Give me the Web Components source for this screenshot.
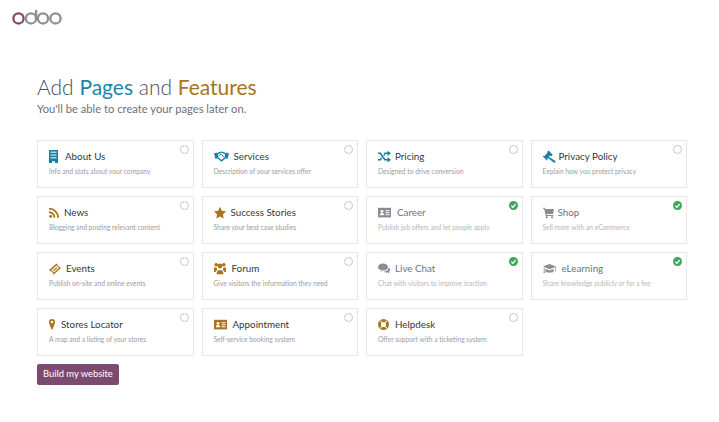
<!DOCTYPE html>
<html>
<head>
<meta charset="utf-8">
<title>Add Pages and Features</title>
<style>
    html, body { margin: 0; background: #fff; }
    body { font-family: Lato, "Noto Sans", sans-serif; color: #4b4f58; }
</style>
</head>
<body>
<theme-page>
    <odoo-logo slot="logo"></odoo-logo>
    <page-title slot="title"></page-title>
    <feature-card icon="building" tint="blue" name="About Us" text="Info and stats about your company"></feature-card>
    <feature-card icon="handshake" tint="blue" name="Services" text="Description of your services offer"></feature-card>
    <feature-card icon="random" tint="blue" name="Pricing" text="Designed to drive conversion"></feature-card>
    <feature-card icon="gavel" tint="blue" name="Privacy Policy" text="Explain how you protect privacy"></feature-card>
    <feature-card icon="rss" tint="gold" name="News" text="Blogging and posting relevant content"></feature-card>
    <feature-card icon="star" tint="gold" name="Success Stories" text="Share your best case studies"></feature-card>
    <feature-card icon="idcard" name="Career" text="Publish job offers and let people apply" checked></feature-card>
    <feature-card icon="cart" name="Shop" text="Sell more with an eCommerce" checked></feature-card>
    <feature-card icon="ticket" tint="gold" name="Events" text="Publish on-site and online events"></feature-card>
    <feature-card icon="users" tint="gold" name="Forum" text="Give visitors the information they need"></feature-card>
    <feature-card icon="comments" name="Live Chat" text="Chat with visitors to improve traction" checked></feature-card>
    <feature-card icon="cap" name="eLearning" text="Share knowledge publicly or for a fee" checked></feature-card>
    <feature-card icon="pin" tint="gold" name="Stores Locator" text="A map and a listing of your stores"></feature-card>
    <feature-card icon="idcard" tint="gold" name="Appointment" text="Self-service booking system"></feature-card>
    <feature-card icon="lifering" tint="gold" name="Helpdesk" text="Offer support with a ticketing system"></feature-card>
    <build-button slot="action">Build my website</build-button>
</theme-page>

<script>
// иконки: w - ширина и текст-отступ подобраны по картинке, высота везде 13
const ICONS = {
    building: { w: 9, gap: 7, box: '0 0 9 13', d: '<path d="M0 0h9v13H6v-1.800H3V13H0z"/><path fill="#fff" opacity=".65" d="M1.500 1.500h6v1.500h-6zM1.500 4.200h6v1.500h-6zM1.500 7h6v1.500h-6z"/>' },
    handshake: { w: 15, gap: 5, box: '0 0 15 13', d: '<path d="M0 3.500 2.600 2.500 3.600 8 1.500 9zM15 3.500 12.400 2.500 11.400 8 13.500 9z"/><path fill="none" stroke="currentColor" stroke-width="1.300" d="M3.300 3.500C5 3 6.500 2.200 7.500 2.200S10 3 11.700 3.500L11.200 7.800 7.500 10.800 3.800 7.800z"/><path fill="none" stroke="currentColor" stroke-width="1" d="M4.800 5.500 7.200 4 10 7.500"/>' },
    random: { w: 13, gap: 4, box: '0 0 13 13', d: '<path d="M0 2.500h2.800l4.600 6.500H9.500V7.200L13 9.800l-3.500 2.600v-1.800H6.500L1.900 4.100H0z"/><path d="M0 9h1.900l1.300-1.800 1 1.300L2.800 10.600H0zM5.300 5 6.500 2.500H9.500V.7L13 3.300 9.500 5.900V4.100H7.400L6.300 6.200z"/>' },
    gavel: { w: 13, gap: 3, box: '0 0 13 13', d: '<path d="M5.600.5 9.800 4.700 8 6.500 7 5.500 5.700 6.800 12.800 11.200 11.300 13 5 8 4 9 4.600 9.600 3.800 10.400-.2 6.400.6 5.600 1.200 6.200 4.600 2.800 4 2.100z"/>' },
    rss: { w: 10, gap: 5, box: '0 0 11 13', d: '<circle cx="1.800" cy="10.800" r="1.600"/><path d="M0 5.200A6.800 6.800 0 0 1 7 12.400H5A4.900 4.900 0 0 0 0 7.200z"/><path d="M0 1.200A11 11 0 0 1 11 12.400H9A9 9 0 0 0 0 3.200z"/>' },
    star: { w: 12, gap: 5, box: '0 0 12 13', d: '<path d="m6 .8 1.800 3.900 4.200.6-3 3 .7 4.300L6 10.500l-3.700 2.100.7-4.300-3-3 4.200-.6z"/>' },
    idcard: { w: 13, gap: 6, box: '0 0 13 13', d: '<path d="M0 1.800h13v9.600H0z"/><circle cx="4" cy="5.300" r="1.400" fill="#fff"/><path fill="#fff" d="M1.800 9.300c0-1.600.9-2.200 2.200-2.200s2.200.6 2.200 2.200zM7.500 4.300h4v1h-4zM7.500 6.300h4v1h-4zM7.500 8.300h4v1h-4z"/>' },
    cart: { w: 11, gap: 4, box: '0 0 11 13', d: '<path d="M0 1.800h2l.3 1.200H11l-1 4.900H3.500l.2 1h6.500V10H2.700L1.200 2.800H0z"/><circle cx="3.800" cy="11.300" r="1.100"/><circle cx="9.100" cy="11.300" r="1.100"/>' },
    ticket: { w: 12, gap: 5, box: '0 0 12 13', d: '<path fill-rule="evenodd" d="M7.500 1.500 8.800 2.800a1.200 1.200 0 0 0 1.600 1.600L12 6 4.800 12.500 3.500 11.200a1.200 1.200 0 0 0-1.600-1.600L0 8zM7.500 3.500 2.400 8l2.500 2.500 5.100-4.500z"/><path d="M7.500 4.700 8.800 6 4.900 9.400 3.600 8.100z" opacity=".7"/>' },
    users: { w: 12, gap: 6, box: '0 0 12 13', d: '<circle cx="2.200" cy="2.800" r="1.800"/><circle cx="9.800" cy="2.800" r="1.800"/><circle cx="6" cy="4" r="2.400"/><path d="M0 5.500h2.600c0 1.200.4 2 1 2.600-1 .3-1.800 1-2 1.900H0zM12 5.500H9.400c0 1.200-.4 2-1 2.600 1 .3 1.800 1 2 1.900H12z"/><path d="M2.600 12.200c0-3 1.100-4 2.300-4h2.200c1.200 0 2.300 1 2.300 4z"/>' },
    comments: { w: 12, gap: 5, box: '0 0 12 13', d: '<ellipse cx="5" cy="5" rx="5" ry="3.600"/><path d="M1.200 10.200c.8 0 1.500-.8 1.900-1.500l1.500.3z"/><path d="M10.500 5.200c1 .7 1.500 1.500 1.500 2.500 0 .9-.5 1.700-1.100 2.200 0 .5.400 1 .9 1.300-1.100 0-1.900-.4-2.400-.9-1.400.4-3 .2-4.100-.9 2.900.1 5.600-1.500 5.200-4.200z"/>' },
    cap: { w: 13, gap: 6, box: '0 0 13 13', d: '<path d="M6.500 2 0 4.500l6.500 2.800 5.800-2.300v4.500h.7V4.500z"/><path d="M2.500 6.800v3c1.600 1.200 6.400 1.200 8 0v-3l-4 1.700z"/><path d="M.8 5.300v4.200l-.5 1.500h1.800l-.5-1.500V5.700z"/>' },
    pin: { w: 6, gap: 6, box: '0 0 7 13', d: '<path fill-rule="evenodd" d="M3.500 0A3.500 3.500 0 0 1 7 3.500C7 6 3.500 13 3.500 13S0 6 0 3.500A3.500 3.500 0 0 1 3.500 0zm0 2a1.500 1.500 0 1 0 0 3 1.500 1.500 0 0 0 0-3z"/>' },
    lifering: { w: 11, gap: 6, box: '0 0 13 13', d: '<path fill-rule="evenodd" d="M6.500 0a6.500 6.500 0 1 1 0 13 6.500 6.500 0 0 1 0-13zm0 3.500a3 3 0 1 0 0 6 3 3 0 0 0 0-6z"/><path fill="#fff" d="M3.600 1.400 5 3.900l-.9.700L2.100 2.700zM9.400 1.400 8 3.900l.9.700 2-1.900zM3.600 11.600 5 9.100l-.9-.7-2 1.900zM9.400 11.600 8 9.100l.9-.7 2 1.900z" opacity=".75"/>' }
};

class ThemePage extends HTMLElement {
    constructor() {
        super();
        this.attachShadow({ mode: 'open' });
        this.shadowRoot.innerHTML = `
            <style>
                :host { display: block; height: 422px; box-sizing: border-box; padding: 10px 32px 0 12px; overflow: hidden; }
                main { padding: 47px 0 0 25px; }
                .grid {
                    display: grid;
                    grid-template-columns: repeat(4, 1fr);
                    grid-auto-rows: 48px;
                    gap: 8px;
                    margin: 23px 0 8px;
                }
            </style>
            <slot name="logo"></slot>
            <main>
                <slot name="title"></slot>
                <div class="grid"><slot></slot></div>
                <slot name="action"></slot>
            </main>
        `;
    }
}

class OdooLogo extends HTMLElement {
    constructor() {
        super();
        this.attachShadow({ mode: 'open' });
        this.shadowRoot.innerHTML = `
            <style>
                :host { display: block; width: 50px; height: 16px; }
                svg { display: block; }
            </style>
            <svg width="50" height="16" viewBox="0 0 50 16" fill="none" stroke-width="2.300">
                <circle cx="6.500" cy="8.400" r="5.100" stroke="#7c4a6f"/>
                <circle cx="19" cy="8.400" r="5.100" stroke="#8f8f8f"/>
                <path d="M24.100 8.400V0" stroke="#8f8f8f"/>
                <circle cx="31" cy="8.400" r="5.100" stroke="#8f8f8f"/>
                <circle cx="43.500" cy="8.400" r="5.100" stroke="#8f8f8f"/>
            </svg>
        `;
    }
}

class PageTitle extends HTMLElement {
    constructor() {
        super();
        this.attachShadow({ mode: 'open' });
        this.shadowRoot.innerHTML = `
            <style>
                :host { display: block; }
                h1 { margin: 0; font-size: 21px; line-height: 28px; font-weight: 300; color: #4b4f58; }
                .pages { color: #1a86a8; font-weight: 400; }
                .features { color: #a8751a; font-weight: 400; }
                p { margin: 0; font-size: 11.200px; line-height: 16px; color: #6d717a; }
            </style>
            <h1>Add <span class="pages">Pages</span> and <span class="features">Features</span></h1>
            <p>You'll be able to create your pages later on.</p>
        `;
    }
}

class FeatureCard extends HTMLElement {
    constructor() {
        super();
        this.attachShadow({ mode: 'open' });
    }

    connectedCallback() {
        const checked = this.hasAttribute('checked');
        const tint = { blue: '#1a7fa3', gold: '#a8751a' }[this.getAttribute('tint')] || '#8a8c94';
        const icon = ICONS[this.getAttribute('icon')];
        const mark = checked
            ? '<svg class="mark" viewBox="0 0 10 10" width="9" height="9"><circle cx="5" cy="5" r="5" fill="#3fa75c"/><path d="M2.700 5.200 4.400 6.900 7.400 3.500" fill="none" stroke="#fff" stroke-width="1.500"/></svg>'
            : '<span class="mark off"></span>';
        this.shadowRoot.innerHTML = `
            <style>
                :host {
                    display: block;
                    position: relative;
                    box-sizing: border-box;
                    padding: 8px 11px;
                    border: 1px solid #e6e6e9;
                    background: #fff;
                }
                .head { display: flex; align-items: center; gap: ${icon.gap}px; height: 14px; margin-bottom: 3px; }
                svg.icon { width: ${icon.w}px; height: 13px; fill: currentColor; color: ${tint}; flex: none; }
                b { font-weight: 400; font-size: 9.800px; line-height: 14px; color: ${checked ? '#70737b' : '#33373f'}; }
                p { margin: 0; font-size: 6.700px; line-height: 10px; white-space: nowrap; color: ${checked ? '#b4b6bb' : '#9a9ca3'}; }
                .mark { position: absolute; top: 4px; right: 4px; box-sizing: border-box; }
                .off { width: 9px; height: 9px; border: 1px solid #c6c7cb; border-radius: 50%; }
            </style>
            <div class="head">
                <svg class="icon" viewBox="${icon.box}">${icon.d}</svg>
                <b>${this.getAttribute('name')}</b>
            </div>
            <p>${this.getAttribute('text')}</p>
            ${mark}
        `;
    }
}

class BuildButton extends HTMLElement {
    constructor() {
        super();
        this.attachShadow({ mode: 'open' });
        this.shadowRoot.innerHTML = `
            <style>
                :host {
                    display: block;
                    width: fit-content;
                    padding: 0 6px;
                    height: 21px;
                    line-height: 20px;
                    font-size: 9.400px;
                    color: #fff;
                    background: #7c4a6f;
                    border-radius: 2px;
                }
            </style>
            <slot></slot>
        `;
    }
}

customElements.define('theme-page', ThemePage);
customElements.define('odoo-logo', OdooLogo);
customElements.define('page-title', PageTitle);
customElements.define('feature-card', FeatureCard);
customElements.define('build-button', BuildButton);
</script>
</body>
</html>
